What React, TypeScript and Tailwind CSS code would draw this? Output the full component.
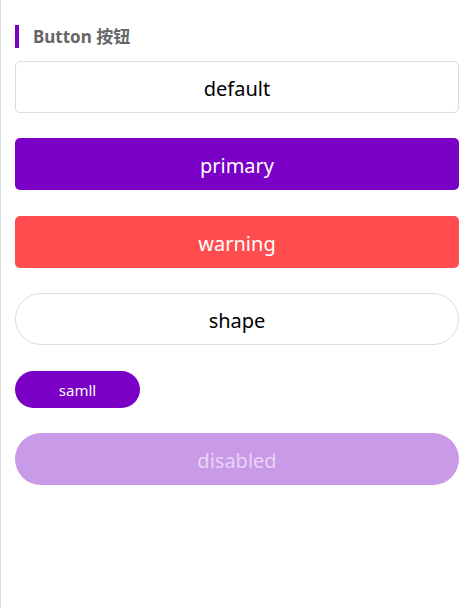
export default function App() {
  return (
    <div
      className="min-h-[608px] w-[471px] border-l border-[#dcdcdc] bg-white"
      style={{ fontFamily: '"Noto Sans", "Noto Sans CJK SC", sans-serif' }}
    >
      <div className="w-[458px] pl-[14px] pt-[25px]">
        <div className="flex h-[23px] items-center">
          <span className="h-[23px] w-[4px] bg-[#7a00c5]" />
          <span className="ml-[14px] text-[17px] font-bold text-[#666]">Button 按钮</span>
        </div>

        <div className="mt-[13px] flex flex-col">
          <button className="h-[52px] w-full rounded-[5px] border border-[#dcdcdc] bg-white pt-[4px] text-[20px] text-black">
            default
          </button>
          <button className="mt-[25px] h-[52px] w-full rounded-[5px] bg-[#7a00c5] pt-[4px] text-[20px] text-white">
            primary
          </button>
          <button className="mt-[26px] h-[52px] w-full rounded-[5px] bg-[#ff4d4f] pt-[4px] text-[20px] text-white">
            warning
          </button>
          <button className="mt-[25px] h-[52px] w-full rounded-full border border-[#dcdcdc] bg-white pt-[4px] text-[20px] text-black">
            shape
          </button>
          <button className="mt-[26px] h-[37px] w-[125px] rounded-full bg-[#7a00c5] pt-[2px] text-[15px] text-white">
            samll
          </button>
          <button
            disabled
            className="mt-[25px] h-[52px] w-full rounded-full bg-[#c99ae7] pt-[4px] text-[20px] text-[#e8d3f5]"
          >
            disabled
          </button>
        </div>
      </div>
    </div>
  );
}
